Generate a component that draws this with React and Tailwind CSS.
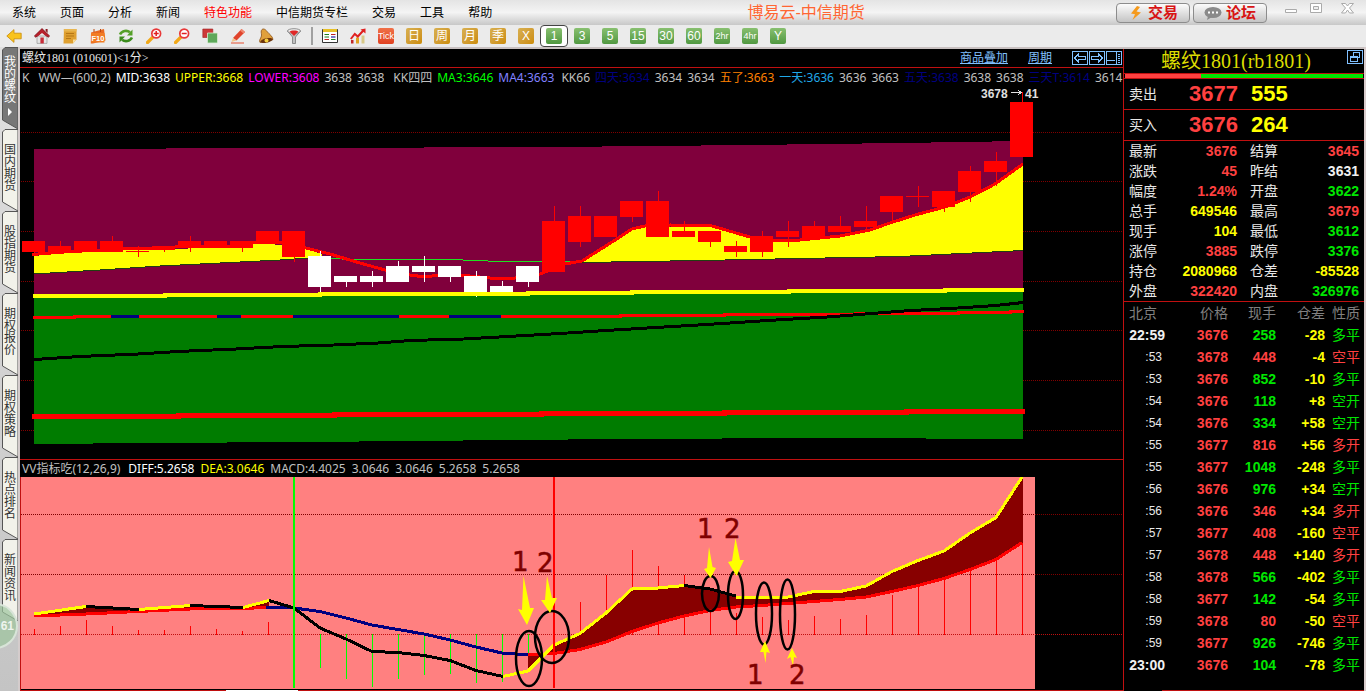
import React from 'react';
import clsx from 'clsx';

const MENU = ['系统', '页面', '分析', '新闻', '特色功能', '中信期货专栏', '交易', '工具', '帮助'];
const SIDE_TABS = ['我的螺纹', '国内期货', '股指期货', '期权报价', '期权策略', '热点排名', '新闻资讯'];
const GOLD_PERIODS = ['日', '周', '月', '季', 'X'];
const GREEN_PERIODS = ['1', '3', '5', '15', '30', '60', '2hr', '4hr', 'Y'];

const INDICATORS = [
    { text: 'K', cls: 'text-[#c0c0c0]' },
    { text: 'WW—(600,2)', cls: 'ml-1 text-[#c0c0c0]' },
    { text: 'MID:3638', cls: 'text-white' },
    { text: 'UPPER:3668', cls: 'text-[#ffff00]' },
    { text: 'LOWER:3608', cls: 'text-[#ff00ff]' },
    { text: '3638', cls: 'text-[#c0c0c0]' },
    { text: '3638', cls: 'text-[#c0c0c0]' },
    { text: 'KK四四', cls: 'ml-1 text-[#c0c0c0]' },
    { text: 'MA3:3646', cls: 'text-[#00ff00]' },
    { text: 'MA4:3663', cls: 'text-[#8080ff]' },
    { text: 'KK66', cls: 'ml-0.5 text-[#c0c0c0]' },
    { text: '四天:3634', cls: 'text-[#000080]' },
    { text: '3634', cls: 'text-[#c0c0c0]' },
    { text: '3634', cls: 'text-[#c0c0c0]' },
    { text: '五了:3663', cls: 'text-[#ff8000]' },
    { text: '一天:3636', cls: 'text-[#20a8e8]' },
    { text: '3636', cls: 'text-[#c0c0c0]' },
    { text: '3663', cls: 'text-[#c0c0c0]' },
    { text: '五天:3638', cls: 'text-[#000080]' },
    { text: '3638', cls: 'text-[#c0c0c0]' },
    { text: '3638', cls: 'text-[#c0c0c0]' },
    { text: '三天T:3614', cls: 'text-[#000080]' },
    { text: '3614', cls: 'text-[#c0c0c0]' },
];

const TONE = {
    r: 'text-[#ff4040]',
    g: 'text-[#00e600]',
    y: 'text-[#ffff00]',
    w: 'text-[#f0f0f0]',
};

const STATS = [
    ['最新', '3676', 'r', '结算', '3645', 'r'],
    ['涨跌', '45', 'r', '昨结', '3631', 'w'],
    ['幅度', '1.24%', 'r', '开盘', '3622', 'g'],
    ['总手', '649546', 'y', '最高', '3679', 'r'],
    ['现手', '104', 'y', '最低', '3612', 'g'],
    ['涨停', '3885', 'r', '跌停', '3376', 'g'],
    ['持仓', '2080968', 'y', '仓差', '-85528', 'y'],
    ['外盘', '322420', 'r', '内盘', '326976', 'g'],
];

const TRADES = [
    ['22:59', '3676', '258', '-28', '多平', 'g'],
    [':53', '3678', '448', '-4', '空平', 'r'],
    [':53', '3676', '852', '-10', '多平', 'g'],
    [':54', '3676', '118', '+8', '空开', 'g'],
    [':54', '3676', '334', '+58', '空开', 'g'],
    [':55', '3677', '816', '+56', '多开', 'r'],
    [':55', '3677', '1048', '-248', '多平', 'g'],
    [':56', '3676', '976', '+34', '空开', 'g'],
    [':56', '3676', '346', '+34', '多开', 'r'],
    [':57', '3677', '408', '-160', '空平', 'r'],
    [':57', '3678', '448', '+140', '多开', 'r'],
    [':58', '3678', '566', '-402', '多平', 'g'],
    [':58', '3677', '142', '-54', '多平', 'g'],
    [':59', '3678', '80', '-50', '空平', 'r'],
    [':59', '3677', '926', '-746', '多平', 'g'],
    ['23:00', '3676', '104', '-78', '多平', 'g'],
];

// [body top, body bottom, wick top, wick bottom]
const CANDLES = [
    [241, 252, 241, 256], [246, 252, 241, 252], [241, 252, 241, 252], [241, 252, 236, 252],
    [251, 252, 246, 257], [246, 250, 246, 252], [241, 248, 236, 252], [241, 248, 241, 248],
    [241, 248, 241, 252], [231, 244, 231, 244], [231, 257, 231, 262], [256, 287, 251, 292],
    [276, 282, 276, 287], [276, 282, 271, 287], [266, 282, 261, 282], [266, 272, 256, 282],
    [266, 277, 266, 282], [276, 292, 271, 297], [286, 292, 281, 292], [266, 282, 266, 287],
    [221, 272, 206, 272], [216, 242, 206, 247], [216, 237, 216, 237], [201, 217, 201, 222],
    [201, 237, 191, 237], [231, 237, 221, 237], [231, 242, 231, 247], [246, 252, 241, 257],
    [236, 252, 231, 257], [231, 237, 221, 247], [226, 239, 221, 239], [226, 232, 216, 232],
    [221, 227, 206, 229], [196, 212, 196, 221], [196, 197, 186, 207], [191, 207, 191, 212],
    [171, 192, 166, 202], [161, 172, 152, 186], [102, 157, 92, 157],
];

// top of each positive bar / bottom of each negative bar around the zero line
const MACD = [
    629, 626, 620, 626, 630, 630, 626, 629, 631, 622, 634, 668, 679, 687, 679, 675, 674, 683, 682, 656,
    634, 602, 575, 550, 566, 575, 597, 613, 617, 620, 616, 619, 615, 595, 587, 580, 571, 561, 543,
];

const Icon = ({ children }) => (
    <svg viewBox="0 0 16 16" className="block h-4 w-4" aria-hidden="true">{children}</svg>
);

const TOOLS = [
    {
        name: '后退',
        icon: <path d="M.8 8 8 1.6v3.6h7.2v5.6H8v3.6z" fill="#f9c31c" stroke="#c88a08" strokeWidth=".8" />,
    },
    {
        name: '首页',
        icon: (
            <>
                <path d="M3 8h10v7.4H3z" fill="#e4e4e4" stroke="#888" strokeWidth=".6" />
                <path d="M8 .6 15.6 8l-1.4 1.2L8 4 1.8 9.2.4 8z" fill="#b8202c" stroke="#7c1018" strokeWidth=".8" />
                <path d="M2 7.500 8 2l6 5.500-1.500 1L8 5 3.500 8.500z" fill="#b8202c" />
                <path d="M11.6 1h2v4l-2-2z" fill="#8c1820" />
                <path d="M6.4 9.5h3.4v5.9H6.4z" fill="#c82c38" />
            </>
        ),
    },
    {
        name: '公告',
        icon: (
            <>
                <path d="M2 1h12.5v10.5L11 15.5H1.5z" fill="#dfa030" />
                <path d="M14.5 11.5 11 15.5v-4z" fill="#f7dc9c" />
                <path d="M1.8 1h12.7v2.5H1.8z" fill="#e8b650" />
                <path d="M4 5.5h8M4 8h8M4 10.5h5" stroke="#a96c10" strokeWidth=".8" />
            </>
        ),
    },
    {
        name: 'F10',
        icon: (
            <>
                <path d="M1 4.5 14 1l1.5 11.5L3 15.5H.8z" fill="#e86820" />
                <path d="M1 5h13.5v9.5H1z" fill="#f27c24" />
                <path d="M4 1v3M10.5 1v3" stroke="#b84810" />
                <text x="1.4" y="12.6" fontSize="7.5" fontWeight="700" fill="#fff" fontFamily="Liberation Sans, sans-serif">F10</text>
            </>
        ),
    },
    {
        name: '刷新',
        icon: (
            <>
                <path d="M2 6.5C4 2.5 9 2 12 4.3" fill="none" stroke="#55a028" strokeWidth="2.6" />
                <path d="M14.5 1.5v6H9z" fill="#55a028" />
                <path d="M14 9.5c-2 4-7 4.500-10 2.200" fill="none" stroke="#3c8c1c" strokeWidth="2.600" />
                <path d="M1.500 14.500v-6H7z" fill="#3c8c1c" />
            </>
        ),
    },
    {
        name: '放大',
        icon: (
            <>
                <path d="m1.500 14.500 5-5" stroke="#f2a818" strokeWidth="3.200" strokeLinecap="round" />
                <circle cx="10.200" cy="5.500" r="4.400" fill="#fff" stroke="#e83838" strokeWidth="1.700" />
                <path d="M10.200 3v5M7.700 5.500h5" stroke="#e02020" strokeWidth="1.500" />
            </>
        ),
    },
    {
        name: '缩小',
        icon: (
            <>
                <path d="m1.500 14.500 5-5" stroke="#f2a818" strokeWidth="3.200" strokeLinecap="round" />
                <circle cx="10.200" cy="5.500" r="4.400" fill="#fff" stroke="#e83838" strokeWidth="1.700" />
                <path d="M7.700 5.500h5" stroke="#e02020" strokeWidth="1.500" />
            </>
        ),
    },
    {
        name: '叠加',
        icon: (
            <>
                <path d="M.8 1h10v8.500h-10z" fill="#cc3838" stroke="#a02020" strokeWidth=".6" />
                <path d="M5.500 5h10v10h-10z" fill="#5ea85a" stroke="#d8ecd4" strokeWidth=".8" />
            </>
        ),
    },
    {
        name: '画线',
        icon: (
            <>
                <path d="M3 10 11.500 1 15 4 6.500 12.500z" fill="#e0442c" />
                <path d="m11.500 1 3.500 3-1.500 1.500-3.500-3z" fill="#f08870" />
                <path d="m3 10 3.500 2.500L1.500 14z" fill="#f3c48c" />
                <path d="M1 15h13" stroke="#e86850" strokeWidth="1.200" />
            </>
        ),
    },
    {
        name: '预警',
        icon: (
            <>
                <path d="M4 1.500C6 0 8 2 9.500 4c2 2.500 5 4 5.500 7.500L2 14.500C.5 12 3.500 10 3.500 7 3.500 5 2.500 3 4 1.500z" fill="#e0a03c" stroke="#8c5018" strokeWidth=".8" />
                <ellipse cx="8.500" cy="12.500" rx="6.300" ry="2.200" fill="#6c340c" transform="rotate(-12 8.500 12.500)" />
                <circle cx="8.500" cy="12.500" r="2" fill="#f6d040" />
            </>
        ),
    },
    {
        name: '筛选',
        icon: (
            <>
                <path d="M1.500 3 6.500 9v6.500h3V9l5-6z" fill="#c0c0c0" stroke="#777" strokeWidth=".8" />
                <ellipse cx="8" cy="3" rx="6.500" ry="2.300" fill="#eee" stroke="#777" strokeWidth=".8" />
                <path d="M3.500 3.500C5 2 11 2 12.500 3.500L8 8z" fill="#e02828" />
            </>
        ),
    },
];

const ToolButton = ({ name, children }) => (
    <button type="button" title={name} aria-label={name} className="flex h-[22px] w-7 items-center justify-center">
        {children}
    </button>
);

const PeriodButton = ({ label, tone, active }) => (
    <button
        type="button"
        className={clsx(
            'flex h-[22px] w-7 items-center justify-center',
            active && 'rounded-sm border border-[#444] bg-white'
        )}
    >
        <span
            className={clsx(
                'flex h-4 w-4 items-center justify-center rounded-xs leading-none text-white',
                label.length === 3 ? 'text-[9px]' : 'text-[12px]',
                tone === 'gold' && 'bg-linear-to-br from-[#d8b050] to-[#cc8c00]',
                tone === 'green' && 'bg-linear-to-b from-[#88c070] to-[#509840]'
            )}
        >
            {label}
        </span>
    </button>
);

const TitleBar = () => (
    <header className="flex h-[25px] items-center bg-linear-to-b from-[#e4e4e4] via-[#f4f4f4] to-[#c8c8c8]">
        <nav className="flex">
            {MENU.map((item) => (
                <button
                    key={item}
                    type="button"
                    className={clsx('px-3 text-[12px] leading-4', item === '特色功能' ? 'text-[#ff0000]' : 'text-black')}
                >
                    {item}
                </button>
            ))}
        </nav>
        <h1 className="flex-1 pr-2 text-center text-[16px] leading-5 text-[#ff6633]">博易云-中信期货</h1>
        <div className="flex items-start gap-[3px]">
            <button type="button" className="flex h-5 w-[74px] items-center justify-center gap-1 rounded-sm border border-[#8c8c8c] bg-linear-to-b from-[#fcfcfc] to-[#c4c4c4] text-[15px] font-bold leading-none text-[#d81414]">
                <svg viewBox="0 0 16 16" className="h-4 w-4" aria-hidden="true">
                    <path d="M9 1 3 8.500l4 .8L4.500 15 13 7.500l-4.500-1L12 2z" fill="#f59a1c" />
                </svg>
                交易
            </button>
            <button type="button" className="flex h-5 w-[74px] items-center justify-center gap-1 rounded-sm border border-[#8c8c8c] bg-linear-to-b from-[#fcfcfc] to-[#c4c4c4] text-[15px] font-bold leading-none text-[#d81414]">
                <svg viewBox="0 0 18 16" className="h-4 w-[18px]" aria-hidden="true">
                    <ellipse cx="9" cy="7.500" rx="8.500" ry="5.500" fill="#8a8a8a" />
                    <path d="m4 11-1 4 5-3z" fill="#8a8a8a" />
                    <path d="M4 6.500h2v2H4zM8 6.500h2v2H8zM12 6.500h2v2h-2z" fill="#fff" />
                </svg>
                论坛
            </button>
            <div className="ml-2 mr-1 flex">
                <button type="button" aria-label="最小化" className="w-7">
                    <svg viewBox="0 0 28 16" className="block w-full"><path d="M7.500 6.500h11v3h-11z" fill="#fff" stroke="#aaa" /></svg>
                </button>
                <button type="button" aria-label="最大化" className="w-7">
                    <svg viewBox="0 0 28 16" className="block w-full">
                        <path d="M4.500.5h11v9h-11z" fill="#fff" stroke="#aaa" />
                        <path d="M7.500 3.500h5v3h-5z" fill="#eee" stroke="#aaa" />
                    </svg>
                </button>
                <button type="button" aria-label="关闭" className="w-7">
                    <svg viewBox="0 0 28 16" className="block w-full">
                        <path d="M7.500.5h4l2 2.500 2-2.500h4L15.500 5l4 5h-4l-2-3-2 3h-4l4-5z" fill="#fff" stroke="#aaa" />
                    </svg>
                </button>
            </div>
        </div>
    </header>
);

const Toolbar = () => (
    <div className="flex h-[22px] items-center bg-[#ebebeb]">
        {TOOLS.map((tool) => (
            <ToolButton key={tool.name} name={tool.name}><Icon>{tool.icon}</Icon></ToolButton>
        ))}
        <div className="mx-[3px] h-[18px] w-0.5 bg-[#a0a0a0]" />
        <ToolButton name="报价">
            <Icon>
                <path d="M.5 1.500h15v13H.5z" fill="#fff" stroke="#333" />
                <path d="M1 1h14v3H1z" fill="#e8c028" />
                <path d="M2.500 6.500h4.500M2.500 9h4.500M9 11.500h4.500" stroke="#208020" strokeWidth="1.200" />
                <path d="M9 6.500h4.500M2.500 11.500h4.500" stroke="#c02020" strokeWidth="1.200" />
                <path d="M9 9h4.500" stroke="#2020a0" strokeWidth="1.200" />
            </Icon>
        </ToolButton>
        <ToolButton name="走势">
            <Icon>
                <path d="M1 12h2.500v3.500H1z" fill="#c02828" />
                <path d="M6 9.500h3v6H6z" fill="#e0a020" />
                <path d="M11.500 7.500h3v8h-3z" fill="#d8c888" />
                <path d="m.8 11 4-5 3 2.500 6-6.500" fill="none" stroke="#e02020" strokeWidth="2" />
                <path d="M15.500.5v5l-5-4z" fill="#e02020" />
            </Icon>
        </ToolButton>
        <button type="button" className="flex h-[22px] w-7 items-center justify-center">
            <span className="flex h-4 w-4 items-center justify-center rounded-xs bg-linear-to-b from-[#f07048] to-[#e04020] text-[9px] leading-none text-white">Tick</span>
        </button>
        {GOLD_PERIODS.map((label) => <PeriodButton key={label} label={label} tone="gold" />)}
        {GREEN_PERIODS.map((label) => <PeriodButton key={label} label={label} tone="green" active={label === '1'} />)}
    </div>
);

const SideTabs = () => (
    <aside className="relative w-5 shrink-0 overflow-hidden border-r-2 border-[#d4cccc] bg-linear-to-b from-[#e0e0e0] to-[#c4c4c4]">
        {SIDE_TABS.map((tab, i) => (
            <button key={tab} type="button" className="relative block h-[82px] w-full pl-0.5">
                <svg viewBox="0 0 18 82" className="absolute inset-0 h-full w-full" aria-hidden="true">
                    <path d="M18 .5H5L2.500 3v70L18 82z" fill={i === 0 ? '#777' : '#f2f2ea'} stroke="#555" />
                </svg>
                <span
                    className={clsx(
                        'relative flex flex-col items-center pb-1 text-[12px] leading-3',
                        i === 0 ? 'text-white' : 'text-[#333]'
                    )}
                >
                    {[...tab].map((c, n) => <span key={n}>{c}</span>)}
                    {i === 0 && (
                        <svg viewBox="0 0 8 8" className="mt-1 h-2 w-2" aria-hidden="true"><path d="M2 0v8l4-4z" fill="#fff" /></svg>
                    )}
                </span>
            </button>
        ))}
        <div className="absolute -left-7 bottom-[42px] flex h-[46px] w-[46px] items-center justify-end rounded-full border-2 border-[#d8e4d8] bg-[#9cc49c]/70 pr-[2px] text-[12px] font-bold text-[#eef4ee]">
            61
        </div>
    </aside>
);

const GridLines = ({ rows, from, to, color }) => rows.map((y) => (
    <path key={y} d={`M${from} ${y}.5H${to}`} stroke={color} strokeDasharray="1 1" />
));

const PriceChart = () => (
    <svg viewBox="20 88 1103 371" className="block h-auto w-full overflow-visible" shapeRendering="crispEdges" role="img" aria-label="K线图">
        <GridLines rows={[132, 181, 231, 281, 330, 380, 430]} from={21} to={1123} color="#800000" />
        <path d="M34 149 300 148 553 147 750 145 900 143 1023 141V300H34z" fill="#80003c" />
        <path d="M34 297 1023 291V439L828 438 620 439 515 440 411 441 307 442 151 443 34 444z" fill="#007c00" />

        <path d="M34 256 64 253 100 251 131 249 152 250 200 248 230 248 255 244 268 244 294 246 306 249 322 254V258H310L280 260 220 263 160 266 100 270 34 274z" fill="#ffff00" />
        <path d="M582 262 612 243 632 230 645 227 712 227 750 238 770 241 800 241 840 237 870 231 890 224 915 216 945 208 970 198 995 185 1023 166V250L900 256 800 258 700 260z" fill="#ffff00" />
        <path d="M34 274 100 270 160 266 220 263 280 260 310 258" fill="none" stroke="#204010" />
        <path d="M310 258.500 372 259.500 450 259.500 500 261.500H582" fill="none" stroke="#20e020" />
        <path d="M582 262.500 700 260.500 800 258.500 900 256.500 1023 250.500" fill="none" stroke="#204010" />
        <path d="M32 254.500 64 252 100 250 131 248H160L190 246 230 247 255 242H294L306 248 330 254 360 263 385 270 410 275 425 277 445 274 470 276 490 278H515L540 274 565 264 582 261 612 242 632 229 645 226 670 225 712 226 750 237 770 240H800L840 236 870 230 890 223 915 215 945 207 970 197 995 184 1023 164" fill="none" stroke="#ff0000" strokeWidth="3" />

        {CANDLES.map(([top, bottom, high, low], i) => {
            const fill = i >= 11 && i <= 19 ? '#ffffff' : '#ff0000';
            return (
                <g key={i} fill={fill}>
                    <rect x={22 + i * 26} y={top} width="23" height={bottom - top} />
                    <rect x={34 + i * 26} y={high} width="1" height={low - high} />
                </g>
            );
        })}

        <path d="M33 296H165V295H320V294H528V293H632V292H789V291H945V290H1024" fill="none" stroke="#ffff00" strokeWidth="4" />
        <path d="M33 317.500H74V316.500H620V315.500H724V314.500H855V313.500H958V312.500H1010V311.500H1024" fill="none" stroke="#ff0000" strokeWidth="3" />
        <path d="M111 316.500H139M217 316.500H241M293 316.500H399M449 316.500H501" stroke="#000080" strokeWidth="3" />
        <path d="M34 359.500 80 356.500 138 354 178 351.500 236 349 282 346.500 334 345 378 343 410 340.500 464 339 508 336.500 560 333.500 606 330.500 664 327 723 323.500 768 320.500 827 317 872 313.500 911 310.500 950 308.500 996 305.500 1023 302.500" fill="none" stroke="#000" strokeWidth="3" />
        <path d="M32 416.500H178V415.500H334V414.500H541V413.500H724V412.500H906V411.500H1025" fill="none" stroke="#ff0000" strokeWidth="5" />

        <g fill="#e0e0e0" fontFamily="Liberation Sans, sans-serif" fontSize="12" fontWeight="700">
            <text x="981" y="98">3678</text>
            <text x="1025" y="98">41</text>
        </g>
        <path d="M1011 92.500h10M1018 90l3 2.500-3 2.500" fill="none" stroke="#e0e0e0" />
    </svg>
);

const DIFF_YELLOW = 'M34 614 86 606.500M139 609.500 190 605.500M243 607.500 269 600.500M503 676.500 528 671 554 645 580 633.500 606 613 632 589 658 588 684 585.500M736 597 788 597 814 591.500 840 591.500 866 586 892 571.500 918 560.500 944 551 970 533 996 517.500 1022 477';
const DIFF_BLACK = 'M86 606.500 139 609.500M190 605.500 243 607.500M269 600.500 294 608 320 628 346 639 372 651.500 398 652.500 424 655.500 450 660.500 476 670.500 503 676.500M684 585.500 710 589 736 596';
const DEA_RED = 'M34 616 86 614 138 611.500 190 609 243 608.500 266 607.500M528 655 554 653.500 580 649.500 606 642 632 631.500 658 623 684 616 710 610.500 736 607 762 605.500 788 603.500 814 601.500 840 599.500 866 597 892 591.500 918 585.500 944 578.500 970 569.500 996 559.500 1022 542.500';
const DEA_BLUE = 'M266 607.500 294 608 320 611.500 346 618 372 625 398 629.500 424 634 450 640 476 647 502 653 528 655';

const MacdChart = () => (
    <svg viewBox="20 477 1103 213" className="block h-auto w-full" shapeRendering="crispEdges" role="img" aria-label="MACD指标图">
        <rect x="21" y="477" width="1014" height="212" fill="#ff8080" />
        <path d="M20.500 477V690" stroke="#c01010" />
        <GridLines rows={[514, 574]} from={21} to={1123} color="#800000" />
        <GridLines rows={[634]} from={21} to={1123} color="#c01010" />
        {MACD.map((y, i) => {
            const negative = y > 634 || i === 19;
            return (
                <rect
                    key={i}
                    x={34 + i * 26}
                    y={negative ? 634 : y}
                    width="1"
                    height={negative ? y - 634 : 635 - y}
                    fill={negative ? '#00ff00' : '#ff0000'}
                />
            );
        })}
        <path d="M34 614 86 606.500 139 609.500 190 605.500 243 607.500 269 600.500V607.500L243 608.500 190 609 138 611.500 86 614 34 616z" fill="#880000" />
        <path d="M528 655V671L554 645 580 633.500 606 613 632 589 658 588 684 585.500 710 589 736 597H788L814 591.500H840L866 586 892 571.500 918 560.500 944 551 970 533 996 517.500 1023 477V542.500L996 559.500 970 569.500 944 578.500 918 585.500 892 591.500 866 597 840 599.500 814 601.500 788 603.500 762 605.500 736 607 710 610.500 684 616 658 623 632 631.500 606 642 580 649.500 554 653.500z" fill="#880000" />
        <path d={DEA_BLUE} fill="none" stroke="#000080" strokeWidth="3" />
        <path d={DEA_RED} fill="none" stroke="#ff0000" strokeWidth="3" />
        <path d={DIFF_BLACK} fill="none" stroke="#000" strokeWidth="3" />
        <path d={DIFF_YELLOW} fill="none" stroke="#ffff00" strokeWidth="3" />
        <path d="M294 477V688" stroke="#00ff00" strokeWidth="2" />
        <path d="M554 477V688" stroke="#ff0000" strokeWidth="2" />

        <g shapeRendering="auto" fill="none" stroke="#000" strokeWidth="2.500">
            <ellipse cx="529" cy="658.500" rx="13" ry="27.500" />
            <ellipse cx="552" cy="637" rx="17" ry="26" />
            <ellipse cx="710.500" cy="593.500" rx="8.500" ry="17.500" />
            <ellipse cx="735.500" cy="595" rx="7.500" ry="24" />
            <ellipse cx="764" cy="613.500" rx="8" ry="31" />
            <ellipse cx="787.500" cy="614.500" rx="7.500" ry="35" />
        </g>
        <g shapeRendering="auto" fill="#ffff00">
            <path d="M523.500 576 530 608 534 608 527 625 518 609 522 610z" />
            <path d="M547 576 552 598 557 598 550 613 541 600 545 600z" />
            <path d="M709 547 712.500 567 716 568 710.500 578 704 569 707 568z" />
            <path d="M735.500 538 740 560 744 560 736.500 576 728 562 732 561z" />
            <path d="M765 641 770 653 766.500 652 765.500 663 763.500 652 760 652z" />
            <path d="M792 648 797 658 794 657 793 666 790.500 657 787 659z" />
        </g>
        <g shapeRendering="auto" fill="#800000" stroke="#800000" strokeWidth=".5" fontFamily="DejaVu Sans, sans-serif" fontSize="26">
            <text x="512" y="571">1</text>
            <text x="537" y="572">2</text>
            <text x="697" y="538">1</text>
            <text x="724" y="538">2</text>
            <text x="747" y="684">1</text>
            <text x="789" y="684">2</text>
        </g>
    </svg>
);

const PaneButton = ({ name, children }) => (
    <button type="button" aria-label={name} className="h-4 w-4">
        <svg viewBox="0 0 16 16" className="block h-4 w-4" fill="none" stroke="#80c0ff" shapeRendering="crispEdges">
            <path d="M.5 1.500h15v13H.5z" />
            {children}
        </svg>
    </button>
);

const Charts = () => (
    <main className="min-w-0 flex-1 border-t-2 border-[#c8c0c0] bg-black">
        <div className="flex h-[19px] items-center border-b border-[#c01010] pl-0.5 text-[12px] leading-4 text-[#e8e8e8]">
            <h2 className="flex-1 font-['Liberation_Serif','Noto_Sans_CJK_SC',serif]">螺纹1801 (010601)&lt;1分&gt;</h2>
            <a href="#overlay" className="mr-5 text-[#80c0ff] underline">商品叠加</a>
            <a href="#period" className="mr-5 text-[#80c0ff] underline">周期</a>
            <div className="mr-px flex gap-px">
                <PaneButton name="左移"><path d="M2.500 8 6.500 4v2.500h7v3h-7V12z" /></PaneButton>
                <PaneButton name="右移"><path d="M13.500 8 9.500 4v2.500h-7v3h7V12z" /></PaneButton>
                <PaneButton name="盘口"><path d="M1 10.500h8M10.500 2v12M12 4.500h2M12 6.500h2M12 8.500h2M12 10.500h2M12 12.500h2" /></PaneButton>
            </div>
        </div>
        <div className="flex h-5 items-center gap-[5px] whitespace-nowrap pl-0.5 font-['Noto_Sans','Noto_Sans_CJK_SC',sans-serif] text-[12px] leading-4">
            {INDICATORS.map((item, i) => <span key={i} className={item.cls}>{item.text}</span>)}
        </div>
        <PriceChart />
        <div className="flex h-[18px] items-center gap-1.5 whitespace-nowrap border-t border-[#c01010] pl-0.5 font-['Noto_Sans','Noto_Sans_CJK_SC',sans-serif] text-[12px] leading-4 text-[#c0c0c0]">
            <span className="mr-0.5">VV指标吃(12,26,9)</span>
            <span className="text-white">DIFF:5.2658</span>
            <span className="text-[#ffff00]">DEA:3.0646</span>
            <span>MACD:4.4025</span>
            <span>3.0646</span>
            <span>3.0646</span>
            <span>5.2658</span>
            <span>5.2658</span>
        </div>
        <MacdChart />
        <div className="flex h-px bg-[#c01010]">
            <div className="ml-[206px] w-[72px] bg-white" />
        </div>
    </main>
);

const OrderRow = ({ label, price, volume }) => (
    <div className="flex h-[31px] items-center border-b border-[#c01010] pl-[5px] text-[22px] font-bold leading-none">
        <span className="w-[60px] text-[14px] font-normal text-[#e8e8e8]">{label}</span>
        <span className="w-[62px] text-[#ff4040]">{price}</span>
        <span className="text-[#ffff00]">{volume}</span>
    </div>
);

const QuotePanel = () => (
    <section className="flex w-[241px] shrink-0 flex-col border-t-2 border-[#c8c0c0] text-[14px] text-[#e8e8e8]">
        <div className="flex flex-1 flex-col border-l border-[#c01010] bg-black">
            <div className="relative flex h-[25px] items-center justify-center border-b border-[#c01010] pr-4">
                <h2 className="font-['Liberation_Serif','Noto_Sans_CJK_SC',serif] text-[20px] leading-6 text-[#dcdc00]">螺纹1801(rb1801)</h2>
                <div className="absolute right-px top-0">
                    <PaneButton name="弹出窗口"><path d="M3.500 8.500h7v4h-7zM3 7.500h8M6.500 7V3.500h6v5H11" /></PaneButton>
                </div>
            </div>
            <div className="flex h-[5px] border-b border-[#c01010] px-px">
                <div className="w-[32%] bg-[#ff4040]" />
                <div className="flex-1 bg-[#00e600]" />
            </div>
            <OrderRow label="卖出" price="3677" volume="555" />
            <OrderRow label="买入" price="3676" volume="264" />
            <table className="w-full table-fixed border-b border-[#c01010]">
                <tbody>
                    {STATS.map(([a, av, at, b, bv, bt]) => (
                        <tr key={a} className="h-5 leading-5">
                            <th scope="row" className="w-[40px] p-0 pl-[5px] text-left font-normal">{a}</th>
                            <td className={clsx('w-[73px] p-0 text-right font-bold', TONE[at])}>{av}</td>
                            <th scope="row" className="w-[53px] p-0 pl-[13px] text-left font-normal">{b}</th>
                            <td className={clsx('p-0 pr-[5px] text-right font-bold', TONE[bt])}>{bv}</td>
                        </tr>
                    ))}
                </tbody>
            </table>
            <table className="w-full table-fixed text-right font-bold">
                <thead>
                    <tr className="h-[22px] leading-5 text-[#808080]">
                        <th className="w-[41px] p-0 pl-[5px] text-left font-normal">北京</th>
                        <th className="w-[63px] p-0 font-normal">价格</th>
                        <th className="w-[48px] p-0 font-normal">现手</th>
                        <th className="w-[49px] p-0 font-normal">仓差</th>
                        <th className="p-0 pr-1 font-normal">性质</th>
                    </tr>
                </thead>
                <tbody>
                    {TRADES.map(([time, price, volume, change, kind, tone], i) => (
                        <tr key={i} className="h-[22px] leading-5">
                            <td className={clsx('p-0', time.length > 3 ? 'text-[#f0f0f0]' : 'pr-[3px] text-[12px] font-normal')}>{time}</td>
                            <td className="p-0 text-[#ff4040]">{price}</td>
                            <td className={clsx('p-0', TONE[tone])}>{volume}</td>
                            <td className="p-0 text-[#ffff00]">{change}</td>
                            <td className={clsx('p-0 pr-1 font-normal', TONE[tone])}>{kind}</td>
                        </tr>
                    ))}
                </tbody>
            </table>
            <div className="mt-auto ml-[38px] h-px bg-[#c01010]" />
        </div>
    </section>
);

export default function App() {
    return (
        <div className="flex min-h-screen flex-col bg-[#ebebeb] font-['Liberation_Sans','Noto_Sans_CJK_SC',sans-serif]">
            <TitleBar />
            <Toolbar />
            <div className="flex flex-1">
                <SideTabs />
                <Charts />
                <QuotePanel />
                <div className="w-0.5 shrink-0 bg-[#d8cccc]" />
            </div>
        </div>
    );
}
